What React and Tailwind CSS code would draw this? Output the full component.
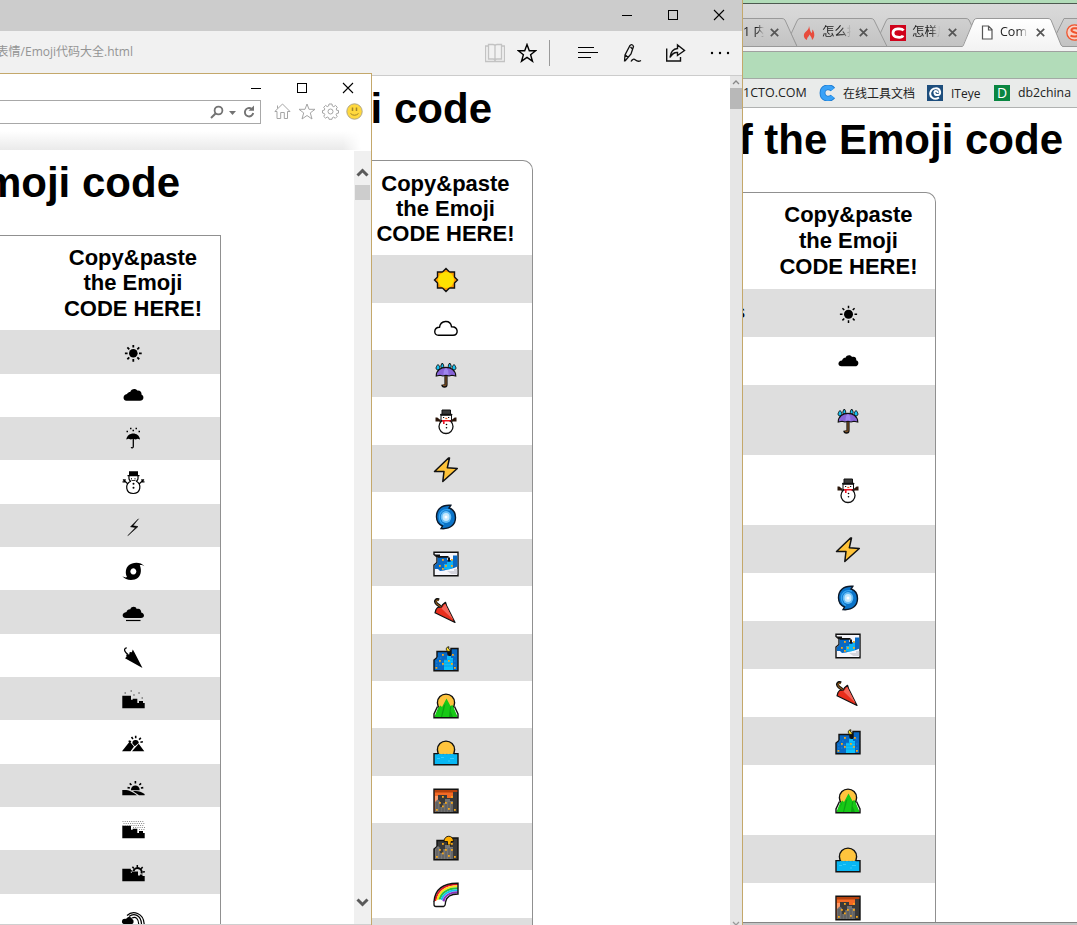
import React from "react";

const LATIN = "font-['Liberation_Sans',sans-serif]";
const UI = "font-['Open_Sans','Noto_Sans_CJK_SC',sans-serif]";

/* ---------- window controls ---------- */
function Controls({ className }) {
  return (
    <div className={`flex items-center gap-[34px] ${className}`}>
      <svg width="12" height="12" viewBox="0 0 12 12" shapeRendering="crispEdges"><path d="M1 6.500h10" stroke="#000" /></svg>
      <svg width="12" height="12" viewBox="0 0 12 12" shapeRendering="crispEdges"><path d="M1.500 1.500h9v9h-9z" fill="none" stroke="#000" /></svg>
      <svg width="12" height="12" viewBox="0 0 12 12"><path d="M1 1l10 10M11 1L1 11" stroke="#000" strokeWidth="1.100" /></svg>
    </div>
  );
}

/* ---------- monochrome glyphs, 24 wide, drawn relative to the row top ---------- */
const rays = (cx, cy, r1, r2, angles) =>
  angles.map((a) => {
    const t = (a * Math.PI) / 180;
    return `M${cx + r1 * Math.cos(t)} ${cy + r1 * Math.sin(t)}L${cx + r2 * Math.cos(t)} ${cy + r2 * Math.sin(t)}`;
  }).join("");
const ALL = [0, 45, 90, 135, 180, 225, 270, 315];

const cloudPath = "M5.500 26.700C1.500 26.700 1.500 20.500 6 20C7 18.500 8 18 9.200 18C10 14.500 15 14.200 16.200 16.500C19 16 21 18.200 20.500 20.500C23.500 22 23 26.700 19 26.700Z";
const skyline = "M1.300 31.300V18.700H10V22.700H11.700V21.800H16.300V26H18V24H22V26H23.700V31.300Z";

const mono = {
  sun: (<><circle cx="12.300" cy="23.300" r="4.300" /><path d={rays(12.3, 23.3, 5.7, 8.400, ALL)} stroke="#000" strokeWidth="1.800" /></>),
  cloud: <path d={cloudPath} />,
  umbrella: (
    <>
      <path d="M5.300 22.500C6.500 14.500 18 14.500 19 22.500L16.800 21.800L14.500 22.500L12.200 21.800L9.800 22.500L7.500 21.800Z" />
      <path d="M12.300 21v8.500c0 1.600-1.800 1.600-2 .6" fill="none" stroke="#000" strokeWidth="1.300" />
      <path d="M5.500 14.500h1.500M9 11.500h1.500M11.500 13.500h1.500M14.500 11.500h1.500M17.500 14.500h1.500" stroke="#000" strokeWidth="1.300" />
    </>
  ),
  snowman: (
    <>
      <path d="M8 11.300h9v4.200h-9zM6.500 15h12v1.200h-12z" />
      <g fill="none" stroke="#000" strokeWidth="1.200">
        <path d="M8 16c-.3 3 .5 4.500 1.500 5M17 16c.3 3-.5 4.500-1.500 5" />
        <path d="M10 21c-6.500 3-5.500 12.500 2.200 12.500S21 24 15 21" />
        <path d="M7 24L2 19.500M4 19v2.800h-2.500M18 24L23 19.500M21 19v2.800h2.500" />
        <path d="M10.500 18v1.500M14 18v1.500M10.500 20.500h4" strokeWidth=".8" />
      </g>
      <circle cx="12.500" cy="23.700" r="1" /><circle cx="12.500" cy="27.700" r="1" />
    </>
  ),
  bolt: <path d="M17.500 14.800L9.500 22.800L14.500 23.600L6.800 31.700L17 22.600L12 21.700Z" stroke="#000" strokeWidth=".5" />,
  cyclone: (
    <path fillRule="evenodd" d="M8 18C11 15.300 19.500 14 23.500 19.300C21.500 17.800 19.800 17.900 18.800 18.200C20.500 22 20.500 27.800 17 30.700C13 33.800 5 34 1.200 29C4 30.800 5.200 30.500 6 30C4 26.500 4.500 20.800 8 18ZM12.300 21.300a3 3.100 0 1 0 .1 0Z" />
  ),
  lowcloud: (
    <>
      <path d="M5 28C.5 28 .5 22.500 5.500 22C6 20 7.500 19 9.300 19.200C10.500 16 15 16.200 15.700 19C18.500 17.800 20.500 20 20.200 22.500C24 23.500 24 28 20 28Z" />
      <path d="M5 30.500h14.500" stroke="#000" strokeWidth="1.200" />
    </>
  ),
  closed: (
    <>
      <path d="M21.500 34L4 24.200L5.500 22.800L5.200 20.500L8 21L8.800 18L10.800 18.300L11.800 15.500L13.500 18.500Z" />
      <path d="M7.500 21L5 18.700C2.500 16.500 3.500 13.800 5.800 13.800" fill="none" stroke="#000" strokeWidth="1.300" />
    </>
  ),
  citysnow: (<><path d={skyline} /><path d="M3.500 16h1.500M9.500 14h1.500M12.200 18h1.500M17.300 16h1.500M20.500 21h1.500" stroke="#444" strokeWidth="1.200" /></>),
  mountain: (
    <>
      <path d="M1 31.200L8.700 21.500L13 26.500L9.500 31.200ZM11 31.200L17.700 23.800L23.300 31.200Z" />
      <path d="M11.400 23.500a3.200 3.200 0 0 1 6.400-.6l-4 3.400Z" />
      <path d={rays(14.700, 23, 4.800, 7.300, [195, 235, 270, 315, 350])} stroke="#000" strokeWidth="1.600" />
    </>
  ),
  sunrise: (
    <>
      <path d="M1.300 31.200V26C8 25.500 11 27.500 16 31.200ZM12 27.300C17 26.500 20 28 23.600 30V31.200H18Z" />
      <path d="M9.900 26.200a4.400 4.800 0 1 1 8.800 0Z" />
      <path d={rays(14.400, 25, 5.600, 8, [190, 225, 270, 315, 350])} stroke="#000" strokeWidth="1.600" />
    </>
  ),
  fog: (
    <>
      <path d={skyline} />
      <path d="M1.500 14.500h22M2.500 16.500h21M1.500 18.500h22M12 20.500h12M18 22.500h6" stroke="#888" strokeWidth="1" strokeDasharray="1 1.200" />
    </>
  ),
  citysun: (
    <>
      <path d="M1.300 31.300V18.700H9.800V22.800H11V21.500H17V25.500H19V24.500H21.500V26H23.700V31.300Z" />
      <path d="M12.500 21a4 4 0 0 1 8 2.500" fill="none" stroke="#000" strokeWidth="2" />
      <path d={rays(16.300, 22.500, 5.300, 7.600, [195, 230, 270, 315, 355])} stroke="#000" strokeWidth="1.500" />
    </>
  ),
  rainbow: (
    <>
      <path d="M1 28.500c-.5-4 3-4 4-3.500c1.500-3 6-2.500 6 0c2 .5 1.500 3 1.500 3.500c0 3-11 3-11.500 0Z" />
      <path d="M6 21.500C12 16 22.500 19 23.200 30M8 22.500C13 18.500 20 21 20.500 30M11 24C15 22 17.500 25 17.700 30" fill="none" stroke="#000" strokeWidth="1.200" />
    </>
  ),
};

/* ---------- colour glyphs on a 26 grid ---------- */
function Windows({ points, color = "#f7a81b" }) {
  return points.map(([x, y]) => <rect key={`${x}-${y}`} x={x} y={y} width="1.800" height="1.800" fill={color} />);
}
const panes = [5, 8, 11, 14, 17, 20];

const color = {
  sun: (<><path d="M13 1.500L16.500 5H21.500V10L24.500 13L21.500 16V21H16.500L13 24.500L9.500 21H4.500V16L1.500 13L4.500 10V5H9.500Z" fill="#fd9b06" stroke="#111" strokeWidth="1.400" /><circle cx="13" cy="13" r="8" fill="#ffe100" /></>),
  cloud: <path d="M5.500 20.300C.2 20.300.5 12.500 6.500 12.300C7.500 5 17.500 4.500 18.500 11.700C25.500 11.500 26 20.300 20 20.300Z" fill="#fff" stroke="#000" strokeWidth="1.400" />,
  umbrella: (
    <>
      <g fill="#16c0ef" stroke="#111" strokeWidth="1">
        <path d="M5 2.500c-3 3-2 5.500 0 5.500s3-2.500 0-5.500ZM9.300 1c-2.300 3-1.500 5 0 5s2.300-2 0-5ZM16.700 1c-2.300 3-1.500 5 0 5s2.300-2 0-5ZM21 2.500c-3 3-2 5.500 0 5.500s3-2.500 0-5.500Z" />
      </g>
      <path d="M13 13v9.500c0 2.200-3 2.200-3.200.2" fill="none" stroke="#111" strokeWidth="3.200" />
      <path d="M13 13v9.500c0 1.500-2.500 1.500-2.800 0" fill="none" stroke="#7c5024" strokeWidth="1.300" />
      <path d="M3.200 14C3.200 2.500 22.500 2.500 22.800 14L19 13.300L16 14L13 13.300L10 14L7 13.300Z" fill="#8764d8" stroke="#111" strokeWidth="1.100" />
      <path d="M10.500 13C10.500 9 11 7 13 6.300C15 7 15.500 9 15.500 13L13 12.300Z" fill="#9e86ed" />
    </>
  ),
  snowman: (
    <>
      <path d="M3.500 8.500v3h4M22.500 8.500v3h-4M4 9.500l5 4M22 9.500l-5 4" stroke="#2b160a" strokeWidth="2" fill="none" />
      <circle cx="13" cy="17.500" r="7" fill="#fff" stroke="#111" strokeWidth="1.300" />
      <path d="M8 6h10.500v5.500h-10.500z" fill="#fff" stroke="#111" />
      <path d="M9 1h8.500v4.500h-8.500zM7.500 5.300h11.500v.8h-11.500z" fill="#3a3a3a" stroke="#111" />
      <path d="M10 8.500h1.200M15 8.500h1.200" stroke="#111" strokeWidth="1.200" />
      <path d="M12.300 9.500h2" stroke="#ee5b22" strokeWidth="1.300" />
      <path d="M9 11.800h8.500M10.800 12v3" stroke="#e81224" strokeWidth="1.600" />
      <circle cx="13.500" cy="15.500" r=".8" /><circle cx="13.500" cy="18.800" r=".8" />
    </>
  ),
  bolt: <path d="M15.500 1L1.500 14.500H11L9.800 24.500L24.300 11.500L14.300 10.800L16.500 1Z" fill="#ffc338" stroke="#111" strokeWidth="1.500" strokeLinejoin="round" />,
  cyclone: (
    <>
      <path d="M17.800 1.300C8 .5 3.300 6 3.500 13C3.700 18 5.500 20.500 9.500 22L8 24.600C18 25.500 22.500 20 22.500 13.500C22.500 8.500 20.500 5.500 16 4Z" fill="#0b74c9" stroke="#0b1829" strokeWidth="1.400" />
      <path d="M17 6C10 4.500 6 8 6.500 14C7 18 8.500 19.500 11 20.500" fill="none" stroke="#36a5f2" strokeWidth="1.300" />
      <ellipse cx="13" cy="13" rx="5.300" ry="6" fill="#69bff7" /><ellipse cx="13" cy="13" rx="3.500" ry="4" fill="#c5e9fd" /><circle cx="13" cy="13" r="1.500" fill="#fff" />
    </>
  ),
  foggy: (
    <>
      <path d="M1 1.200H25V24.800H1V14L4 11.500V6L1 3.500Z" fill="#f6f6fb" stroke="#111" strokeWidth="1.400" />
      <path d="M1.700 14.500L4.600 11.800V6H14V9H20V4.500H24.400V15.500L21 17L16 18L11 19.500L7 20L5 18L1.700 18Z" fill="#0869c4" />
      <path d="M14 11h4V9h2v8l-4 1.500h-5V13h3z" fill="#0cb3f5" />
      <path d="M1.500 3.500H7V5H15.500V6.500H17V10.500H14.800V6.800H5Z" fill="#111" />
      <path d="M14 20h7v-2h3.300v5h-6z" fill="#d5d5dd" />
      <Windows points={[[9, 8], [18, 8], [6, 14], [12, 14], [18, 14], [9, 17]]} />
    </>
  ),
  closed: (
    <>
      <path d="M8 9L4 6C.8 3.200 3.500 0.500 6 2" fill="none" stroke="#111" strokeWidth="3" />
      <path d="M8 9L4 6C1.500 3.500 3.500 1.500 5.800 2.500" fill="none" stroke="#8d5a1b" strokeWidth="1.100" />
      <path d="M22 24.500L2 14.800L3 11.500L4.500 9.500L8.500 9L9.500 6.800L12.500 4.300L13.500 7.500Z" fill="#e92e1c" stroke="#111" strokeWidth="1.200" strokeLinejoin="round" />
      <path d="M20.500 22L8.500 10.500L12.300 6Z" fill="#f4665a" />
    </>
  ),
  night: (
    <>
      <path d="M1 24.800V14L4 11.500V5.500H15V8H18V2.500H25V24.800Z" fill="#0869c4" stroke="#111" strokeWidth="1.400" />
      <path d="M14 10h4V12h2v12h-9V14h3z" fill="#0cc0fb" />
      <path d="M11 14h9M11 17h9M11 20h9" stroke="#0b93e0" strokeWidth=".7" />
      <path d="M4 12h6M3 16h8M3 19h8M21 10h3M21 15h3M21 19h3" stroke="#2b8be0" strokeWidth=".8" strokeDasharray="1.500 1.500" />
      <path d="M14.500 5h3.500v5h-2.500z" fill="#111" />
      <path d="M15.500.8C12.500 1 12.500 5.500 16 5.500L18 4.200C16 4 15 2.500 16 .8Z" fill="#ffe022" stroke="#111" strokeWidth=".9" />
      <Windows points={[[9, 8], [19, 8], [6, 14], [15, 14], [9, 17], [18, 17], [2.500, 21], [21, 21]]} />
    </>
  ),
  mountain: (
    <>
      <circle cx="13" cy="9.700" r="8.600" fill="#ffc43d" stroke="#111" strokeWidth="1.400" />
      <path d="M1 24.800L5 15L7.500 12.500L9 14L13.500 5.500L17.500 13L19.500 12L25 24.800Z" fill="#17c916" />
      <path d="M4.500 13.500L1 21V24.700H25V21L21.500 13.500" fill="none" stroke="#111" strokeWidth="1.400" />
      <path d="M8 24L10.500 13L12.500 10.500L11 17L9 24ZM17 14L18.500 12.500L17.500 18L20 24H16ZM6 16L7.500 14L5 20Z" fill="#0b9313" opacity=".75" />
    </>
  ),
  sea: (
    <>
      <circle cx="13" cy="9.700" r="8.600" fill="#ffc43d" stroke="#111" strokeWidth="1.400" />
      <path d="M1 14H25V24.800H1Z" fill="#08b7f3" />
      <path d="M5 13.600H1V24.700H25V13.600H21" fill="none" stroke="#111" strokeWidth="1.400" />
      <path d="M6 14.300h15" stroke="#3a8fae" strokeWidth=".8" strokeDasharray="1.500 2" />
      <path d="M4 18.500h3M8 17.500h3M17 18.500h4M15 21h2" stroke="#47d6ff" strokeWidth=".7" />
    </>
  ),
  dusk: (
    <>
      <path d="M1 1.200H25V24.800H1Z" fill="#f46a25" />
      <path d="M2 2h22v2.500h-22z" fill="#b5410d" /><path d="M2 8h3.500v6h-3.500z" fill="#ff9a67" />
      <path d="M5 24V7H14V10H20V4H25V24Z" fill="#393939" />
      <path d="M2 24V14L4.500 11.500L7 13V19H10V15H12V11H17V13H20V24Z" fill="#707070" />
      <path d="M1 1.200H25V24.800H1Z" fill="none" stroke="#111" strokeWidth="1.400" />
      {panes.map((x) => <path key={x} d={`M${x - 1} 14v10`} stroke="#444" strokeWidth=".6" />)}
      <Windows points={[[9, 8], [18, 8], [6, 14], [12, 14], [18, 14], [9, 17.500], [3, 21], [15, 20], [21, 21]]} />
    </>
  ),
  citydusk: (
    <>
      <path d="M1 24.800V14L4 11.500V5.500H15V3H25V24.800Z" fill="#3a3a3a" stroke="#111" strokeWidth="1.400" />
      <path d="M11 6.500C11 -.5 20.500 -.5 20.500 6.500H18V10H14.500V6.500Z" fill="#ffae00" stroke="#111" strokeWidth=".9" />
      <path d="M2 24V14L5 11L7 13V18H10V14H12V10H17V12H20V24Z" fill="#777" />
      {panes.map((x) => <path key={x} d={`M${x - 1} 13v11`} stroke="#444" strokeWidth=".6" />)}
      <Windows points={[[9, 8], [18, 8], [6, 14], [12, 14], [18, 14], [9, 17.500], [3, 21], [15, 20], [21, 21]]} />
    </>
  ),
  rainbow: (
    <>
      <path d="M1 19C3 7 12 1 25 1.200V12C18 12 14 14.500 12.500 20L6 18Z" fill="#fff" />
      <g fill="none" strokeWidth="2.100">
        <path d="M2.200 19C4 8 12.500 2.300 25 2.300" stroke="#e81224" />
        <path d="M4.200 19C6 9.500 13.500 4.300 25 4.300" stroke="#ffdf1a" />
        <path d="M6.200 19C8 11 14.500 6.300 25 6.300" stroke="#26c53c" />
        <path d="M8.200 19C9.500 13 15 8.300 25 8.300" stroke="#15bdf2" />
        <path d="M10.200 20C11 14.500 16 10.300 25 10.300" stroke="#8b32bf" />
      </g>
      <path d="M1 19.500C2 7 11 1 25 1.200V12C18 12 13.500 14.500 12.500 20" fill="none" stroke="#111" strokeWidth="1.400" />
      <path d="M3 24.500C.5 24.500.5 19.500 3 19.300C4.500 17 9 17 9.800 19.300C13 19 13.500 24.500 10.500 24.500Z" fill="#fff" />
      <path d="M1 19V22.500Q1 24.500 3 24.500H10.500Q12.500 24 12.500 20" fill="none" stroke="#111" strokeWidth="1.300" />
    </>
  ),
  textsun: (<><circle cx="13.500" cy="13.300" r="4.500" /><path d={rays(13.5, 13.3, 6, 8.600, ALL)} stroke="#000" strokeWidth="1.500" /></>),
  textcloud: <path d="M6.500 17.300C2.300 17.300 2.500 11.800 7 11.500C8 9 9 8.800 10.500 8.800C12 5.300 16 6 17 8C20 7.200 21.800 9.200 21.200 11.200C24.500 12.200 24 17.300 20 17.300Z" />,
};

const ieRows = [["sun", 44], ["cloud", 43], ["umbrella", 43], ["snowman", 44], ["bolt", 43], ["cyclone", 43], ["lowcloud", 44], ["closed", 43], ["citysnow", 43], ["mountain", 44], ["sunrise", 43], ["fog", 43], ["citysun", 44], ["rainbow", 43]];
const edgeRows = [["sun", 48], ["cloud", 47], ["umbrella", 47], ["snowman", 48], ["bolt", 47], ["cyclone", 47], ["foggy", 47], ["closed", 48], ["night", 47], ["mountain", 47], ["sea", 48], ["dusk", 47], ["citydusk", 47], ["rainbow", 48], ["sun", 47]];
const chromeRows = [["textsun", 48], ["textcloud", 48], ["umbrella", 70], ["snowman", 70], ["bolt", 48], ["cyclone", 48], ["foggy", 48], ["closed", 48], ["night", 48], ["mountain", 70], ["sea", 48], ["dusk", 48]];

function HeaderText({ className }) {
  return (
    <div className={`text-center text-[22px] font-bold whitespace-nowrap text-black ${LATIN} ${className}`}>
      Copy&amp;paste<br />the Emoji<br />CODE HERE!
    </div>
  );
}

function Rows({ rows, glyph, side, label }) {
  return rows.map(([name, h], i) => (
    <div key={i} className={`relative flex shrink-0 ${i % 2 ? "bg-white" : "bg-[#dedede]"} ${side}`} style={{ height: h }}>
      {i === 0 && label}
      {glyph(name, h)}
    </div>
  ));
}
const monoGlyph = (name) => <svg width="24" height="43" viewBox="0 0 24 43" className="shrink-0">{mono[name]}</svg>;
const colorGlyph = (name, h) => <svg width="26" height="26" viewBox="0 0 26 26" className={`shrink-0 ${h > 60 ? "mt-[23px]" : "mt-[12px]"}`}>{color[name]}</svg>;

/* ---------- right window ---------- */
function TabClose({ className }) {
  return <svg width="9" height="9" viewBox="0 0 9 9" className={`shrink-0 ${className}`}><path d="M.8.8l7.400 7.400M8.200.8L.8 8.200" stroke="#555" strokeWidth="1.700" /></svg>;
}
function TabTitle({ children, className }) {
  return <span className={`shrink-0 overflow-hidden text-[12.500px] whitespace-nowrap [mask-image:linear-gradient(to_right,black_65%,transparent)] ${className}`}>{children}</span>;
}

function ChromeWindow() {
  return (
    <div className={`absolute top-0 left-[743px] flex h-[925px] w-[334px] flex-col overflow-hidden bg-white text-[#222] ${UI}`}>
      <div className="h-[3px] shrink-0 bg-[#b2dcb9]" />
      <div className="relative h-[49px] shrink-0 border-t border-b border-t-[#4d5a50] border-b-[#a0a0a0] bg-linear-to-b from-[#dadada] to-[#c9c9c9]">
        <svg className="absolute top-0 left-0" width="334" height="47" viewBox="0 0 334 47">
          <defs>
            <linearGradient id="tab" x1="0" y1="0" x2="0" y2="1"><stop offset="0" stopColor="#d0d0d0" /><stop offset="1" stopColor="#c3c3c3" /></linearGradient>
            <linearGradient id="active" x1="0" y1="0" x2="0" y2="1"><stop offset="0" stopColor="#fff" /><stop offset="1" stopColor="#f2f2f2" /></linearGradient>
          </defs>
          <path d="M0 43h334v4H0z" fill="#f2f2f2" />
          <g fill="url(#tab)" stroke="#999" strokeWidth="1">
            <path d="M307 42.500L321 14.500H340V42.500Z" />
            <path d="M142 42.500H239L226 16Q225 14.500 223 14.500H146Q144 14.500 143 17L137 30Z" />
            <path d="M54 42.500H144L131 16Q130 14.500 128 14.500H57Q55 14.500 54 17L48 30Z" />
            <path d="M-2 42.500H54L42 16Q41 14.500 39 14.500H-2Z" />
          </g>
          <path d="M219 42.500Q219 42.500 220 41L231 16Q232 14.500 234 14.500H305Q307 14.500 308 16L318 41Q319 42.500 320 42.500V47H219Z" fill="url(#active)" />
          <path d="M0 42.500H219Q220 42.500 220.500 41L231 16Q232 14.500 234 14.500H305Q307 14.500 308 16L318 41Q319 42.500 320 42.500H334" fill="none" stroke="#999" />
        </svg>
        <div className="relative mt-[14px] flex h-[29px] items-center">
          <TabTitle className="w-[21px]">1 内</TabTitle>
          <TabClose className="ml-[6px]" />
          <svg width="12" height="16" viewBox="0 0 12 16" className="ml-[24px] shrink-0"><path d="M6 1C7 4 6.500 5.500 8.500 8C9.500 7.500 9 5.500 9.500 4.500C12 8 12 12.500 9 15C9 12 7.500 11.500 6.500 9.500C6 12 4 12 4 15C0 13 0 9 3 6.500C4.500 5 6 4 6 1Z" fill="#e84c3d" /></svg>
          <TabTitle className="ml-[7px] w-[29px]">怎么接</TabTitle>
          <TabClose className="ml-[8px]" />
          <svg width="16" height="16" viewBox="0 0 16 16" className="ml-[22px] shrink-0"><path d="M0 0h16v16H0z" fill="#d0021b" /><path d="M13.500 5.500C12 3.200 3 2.700 3 8S12 13 13 10.500" fill="none" stroke="#fff" strokeWidth="2.800" /></svg>
          <TabTitle className="ml-[6px] w-[28px]">怎样用</TabTitle>
          <TabClose className="ml-[8px]" />
          <svg width="12" height="15" viewBox="0 0 12 15" className="ml-[24px] shrink-0"><path d="M1.500 1h6l3.500 3.500v9.500h-9.500zM7.500 1v4H11" fill="#fff" stroke="#555" strokeWidth="1.200" /></svg>
          <TabTitle className="ml-[7px] w-[28px]">Com</TabTitle>
          <TabClose className="ml-[8px]" />
          <svg width="17" height="17" viewBox="0 0 17 17" className="ml-[21px] shrink-0"><circle cx="8.500" cy="8.500" r="7.700" fill="#f7d2c6" stroke="#f0532d" strokeWidth="1.300" /><path d="M12.500 5C10 3.500 5 4 5.500 6.500S12 8 12 10.500S6.500 13 4.500 11.500" fill="none" stroke="#f0532d" strokeWidth="2" /></svg>
        </div>
      </div>
      <div className="h-[26px] shrink-0 bg-[#b2dcb9]" />
      <div className="flex h-[30px] shrink-0 items-center border-t border-b border-t-[#a3aaa5] border-b-[#b0b2b1] bg-[#e9ebea] text-[12px] whitespace-nowrap">
        <span className="flex w-[63px] shrink-0 pt-px text-[12.500px]">1CTO.COM</span>
        <svg width="17" height="16" viewBox="0 0 17 16" className="ml-[13px] shrink-0"><path d="M13.800 4.500C11 1 3.500 1.500 3.500 8S11 15 13.800 11.500" fill="none" stroke="#1b79cf" strokeWidth="5.800" /><path d="M13.800 4.500C11 1 3.500 1.500 3.500 8S11 15 13.800 11.500" fill="none" stroke="#39a2f7" strokeWidth="4.200" /></svg>
        <span className="ml-[7px] w-[76px] shrink-0 pt-px">在线工具文档</span>
        <svg width="16" height="16" viewBox="0 0 16 16" className="ml-[8px] shrink-0"><path d="M0 0h16v16H0z" fill="#1d4e7d" /><path d="M12 12.500C7 16 2 11.500 3.500 7S12 2 13 6.500S8 11 7.500 8S10.500 5.500 11 8" fill="none" stroke="#fff" strokeWidth="2" /></svg>
        <span className="ml-[8px] w-[31px] shrink-0 pt-px text-[12px]">ITeye</span>
        <span className="ml-[12px] flex h-4 w-4 shrink-0 items-center justify-center bg-[#098641] text-[14px] leading-4 font-medium text-white">D</span>
        <span className="ml-[8px] shrink-0 pt-px text-[12.300px]">db2china</span>
      </div>
      <h1 className={`mt-[7px] flex h-[48px] w-[320px] shrink-0 items-center justify-end text-[42px] font-bold whitespace-nowrap text-black ${LATIN}`}>f the Emoji code</h1>
      <div className="mt-[29px] flex h-[730px] w-[193px] shrink-0 flex-col overflow-hidden rounded-tr-[10px] border-t border-r border-[#909090]">
        <div className="flex h-[96px] shrink-0 justify-end pt-[9px] pr-[17.500px]"><HeaderText className="leading-[26px]" /></div>
        <Rows
          rows={chromeRows}
          glyph={colorGlyph}
          side="justify-end pr-[74px]"
          label={<span className={`absolute top-[10px] right-[190px] text-[18px] whitespace-nowrap text-black ${LATIN}`}>s</span>}
        />
      </div>
      <div className="h-[3px] shrink-0 border-t border-[#858585] bg-[#c5c5c5]" />
    </div>
  );
}

/* ---------- middle window ---------- */
function EdgeWindow() {
  return (
    <div className="absolute top-0 left-0 flex h-[925px] w-[743px] flex-col overflow-hidden border-r border-[#c4a86b] bg-white">
      <div className="flex h-[30px] shrink-0 justify-end bg-[#cccccc] pr-[17px]"><Controls className="h-[30px]" /></div>
      <div className="h-px shrink-0 bg-[#cccccc]" />
      <div className="flex h-[45px] shrink-0 items-center border-b border-[#cccccc] bg-[#f1f1f1]">
        <span className={`flex w-[133px] shrink-0 justify-end pb-[3px] text-[12px] whitespace-nowrap text-[#949494] ${UI}`}>表情/Emoji代码大全.html</span>
        <svg width="20" height="20" viewBox="0 0 20 20" className="ml-[352px] shrink-0" fill="none" stroke="#c3c3c3"><path d="M3.500 3H.5v15.500h19V3H16.500M10 3v15.500M3.500 1.500H8Q10 1.500 10 3Q10 1.500 12 1.500H16.500V16H12Q10 16 10 18Q10 16 8 16H3.500Z" strokeWidth="1.300" /></svg>
        <svg width="20" height="20" viewBox="0 0 20 20" className="ml-[12px] shrink-0"><path d="M10 1.500L12.300 7.700H18.700L13.600 11.700L15.500 18.200L10 14.400L4.500 18.200L6.400 11.700L1.300 7.700H7.700Z" fill="none" stroke="#000" strokeWidth="1.400" /></svg>
        <div className="ml-[12px] h-[26px] w-px shrink-0 bg-[#9a9a9a]" />
        <svg width="20" height="12" viewBox="0 0 20 12" className="mb-[2px] ml-[28px] shrink-0" shapeRendering="crispEdges"><path d="M0 1.500h16M0 6.500h20M0 11.500h13" stroke="#000" /></svg>
        <svg width="19" height="20" viewBox="0 0 19 20" className="mb-px ml-[25px] shrink-0" fill="none" stroke="#111" strokeWidth="1.300"><path d="M1.500 18.500L2 12L7 2.500Q9.500.5 10.500 3.500L8 11L2 18M7.500 4L9.500 6M2.500 12L5 14.500M8 18.500Q10 14.800 12.500 17T18 17.500" /></svg>
        <svg width="21" height="20" viewBox="0 0 21 20" className="mb-px ml-[23px] shrink-0" fill="none" stroke="#111" strokeWidth="1.400"><path d="M1.700 5.500V18H15.500V14M5 14.500Q6 6 12.500 5.500V2L19.500 7.500L12.500 12.500V9.500Q8 9 5 14.500Z" /></svg>
        <svg width="20" height="4" viewBox="0 0 20 4" className="ml-[24px] shrink-0"><circle cx="2" cy="2" r="1.200" /><circle cx="10" cy="2" r="1.200" /><circle cx="18" cy="2" r="1.200" /></svg>
      </div>
      <div className="flex min-h-0 grow">
        <div className="flex min-w-0 grow flex-col overflow-hidden">
          <h1 className={`mt-[8px] flex h-[48px] w-[492px] shrink-0 items-center justify-end text-[42px] font-bold whitespace-nowrap ${LATIN}`}>Emoji code</h1>
          <div className="mt-[28px] flex w-[533px] shrink-0 flex-col rounded-tr-[10px] border-t border-r border-[#909090]">
            <div className="flex h-[94px] shrink-0 justify-end pt-[10px] pr-[17.500px]"><HeaderText className="leading-[25px]" /></div>
            <Rows rows={edgeRows} glyph={colorGlyph} side="justify-end pr-[73px]" />
          </div>
        </div>
        <div className="flex w-[12px] shrink-0 flex-col items-center bg-[#e6e6e6]">
          <svg width="12" height="12" viewBox="0 0 12 12" className="shrink-0"><path d="M3 8l3-3l3 3" fill="none" stroke="#888" strokeWidth="1.300" /></svg>
          <div className="h-[21px] w-[12px] shrink-0 bg-[#b8b8b8]" />
          <svg width="12" height="4" viewBox="0 0 12 4" className="mt-auto shrink-0"><path d="M3 1l3 3l3-3" fill="none" stroke="#999" strokeWidth="1.300" /></svg>
        </div>
      </div>
    </div>
  );
}

/* ---------- left window ---------- */
function ExplorerWindow() {
  return (
    <div className="absolute top-[73px] left-0 flex h-[852px] w-[372px] flex-col overflow-hidden border-t border-r border-[#c4a86b] bg-white">
      <div className="flex h-[26px] shrink-0 justify-end pt-[2px] pr-[17px]"><Controls className="h-[24px]" /></div>
      <div className="flex h-[24px] shrink-0 items-center">
        <div className="flex h-[24px] w-[261px] shrink-0 items-center border-t border-r border-b border-[#a8a8a8]">
          <svg width="14" height="14" viewBox="0 0 14 14" className="ml-[210px] shrink-0" fill="none" stroke="#737373"><circle cx="8.500" cy="5.500" r="3.900" strokeWidth="1.800" /><path d="M5.800 8.300L1 13" strokeWidth="2" /></svg>
          <svg width="7" height="4" viewBox="0 0 7 4" className="mt-px ml-[5px] shrink-0"><path d="M0 0h7L3.500 4z" fill="#737373" /></svg>
          <svg width="12" height="14" viewBox="0 0 12 14" className="ml-[7px] shrink-0"><path d="M8.500 3.800A4.200 4.200 0 1 0 10.200 8" fill="none" stroke="#737373" strokeWidth="1.900" /><path d="M5.500 5.800H11V.5Z" fill="#737373" /></svg>
        </div>
        <svg width="17" height="17" viewBox="0 0 17 17" className="mb-[2px] ml-[12.500px] shrink-0" fill="none" stroke="#a5a5a5"><path d="M.8 8.500L8.500 1L16 8.500H13.500V15.500H10.300V9.500H6.700V15.500H3V8.500ZM3.500 5.500V2.500" /></svg>
        <svg width="18" height="17" viewBox="0 0 18 17" className="mb-[2px] ml-[7px] shrink-0" fill="none" stroke="#a5a5a5"><path d="M9 1L11 6.300H17L12.300 9.900L14 16L9 12.500L4 16L5.700 9.900L1 6.300H7Z" /></svg>
        <svg width="17" height="17" viewBox="0 0 17 17" className="mb-[2px] ml-[6.500px] shrink-0" fill="none" stroke="#a5a5a5"><circle cx="8.500" cy="8.500" r="2.500" /><path d="M7 1h3l.3 2l1.500.7L13.500 2.400l1.800 2L14.200 6l.5 1.300l1.800.2v2.600l-1.900.4l-.5 1.300l1.100 1.600l-1.900 1.900l-1.600-1.200l-1.400.6L10 16.300H7l-.4-1.700l-1.400-.6l-1.600 1.200L1.700 13.300l1.100-1.600l-.5-1.200L.5 10V7.500l1.800-.3l.5-1.300L1.700 4.300l1.900-1.900l1.600 1.200L6.600 3Z" /></svg>
        <svg width="17" height="17" viewBox="0 0 17 17" className="mb-[2px] ml-[7px] shrink-0"><circle cx="8.500" cy="8.500" r="7.700" fill="#ffd83d" stroke="#b0a687" /><path d="M6.500 4.500v3.500M10.500 4.500v3.500" stroke="#a1842b" strokeWidth="1.500" /><path d="M4.500 10.500Q8.500 14 12.500 10.500" fill="none" stroke="#a1842b" /></svg>
      </div>
      <div className="mt-[7px] h-[19px] w-[361px] shrink-0 bg-linear-to-b from-white to-[#eaeaea] [mask-image:linear-gradient(to_right,black_95%,transparent)]" />
      <div className="flex min-h-0 grow border-b border-[#cfcfcf] bg-white">
        <div className="flex min-w-0 grow flex-col overflow-hidden">
          <h1 className={`mt-[8px] flex h-[48px] w-[180px] shrink-0 items-center justify-end text-[42px] font-bold whitespace-nowrap ${LATIN}`}>moji code</h1>
          <div className="mt-[29px] flex w-[221px] shrink-0 flex-col border-t border-r border-[#909090]">
            <div className="flex h-[94px] shrink-0 justify-end pt-[9px] pr-[18px]"><HeaderText className="leading-[25.400px]" /></div>
            <Rows rows={ieRows} glyph={monoGlyph} side="justify-end pr-[75px]" />
          </div>
        </div>
        <div className="mt-px flex w-[17px] shrink-0 flex-col items-center bg-[#f0f0f0]">
          <svg width="17" height="34" viewBox="0 0 17 34" className="shrink-0"><path d="M3.500 24.500L8.500 19.500L13.500 24.500" fill="none" stroke="#5a5a5a" strokeWidth="3" /></svg>
          <div className="h-[15px] w-[15px] shrink-0 bg-[#cdcdcd]" />
          <svg width="17" height="34" viewBox="0 0 17 34" className="mt-auto shrink-0"><path d="M3.500 9.500L8.500 14.500L13.500 9.500" fill="none" stroke="#5a5a5a" strokeWidth="3" /></svg>
        </div>
      </div>
    </div>
  );
}

export default function App() {
  return (
    <div className="relative h-[925px] w-[1077px] overflow-hidden bg-white text-black">
      <ChromeWindow />
      <EdgeWindow />
      <ExplorerWindow />
    </div>
  );
}
